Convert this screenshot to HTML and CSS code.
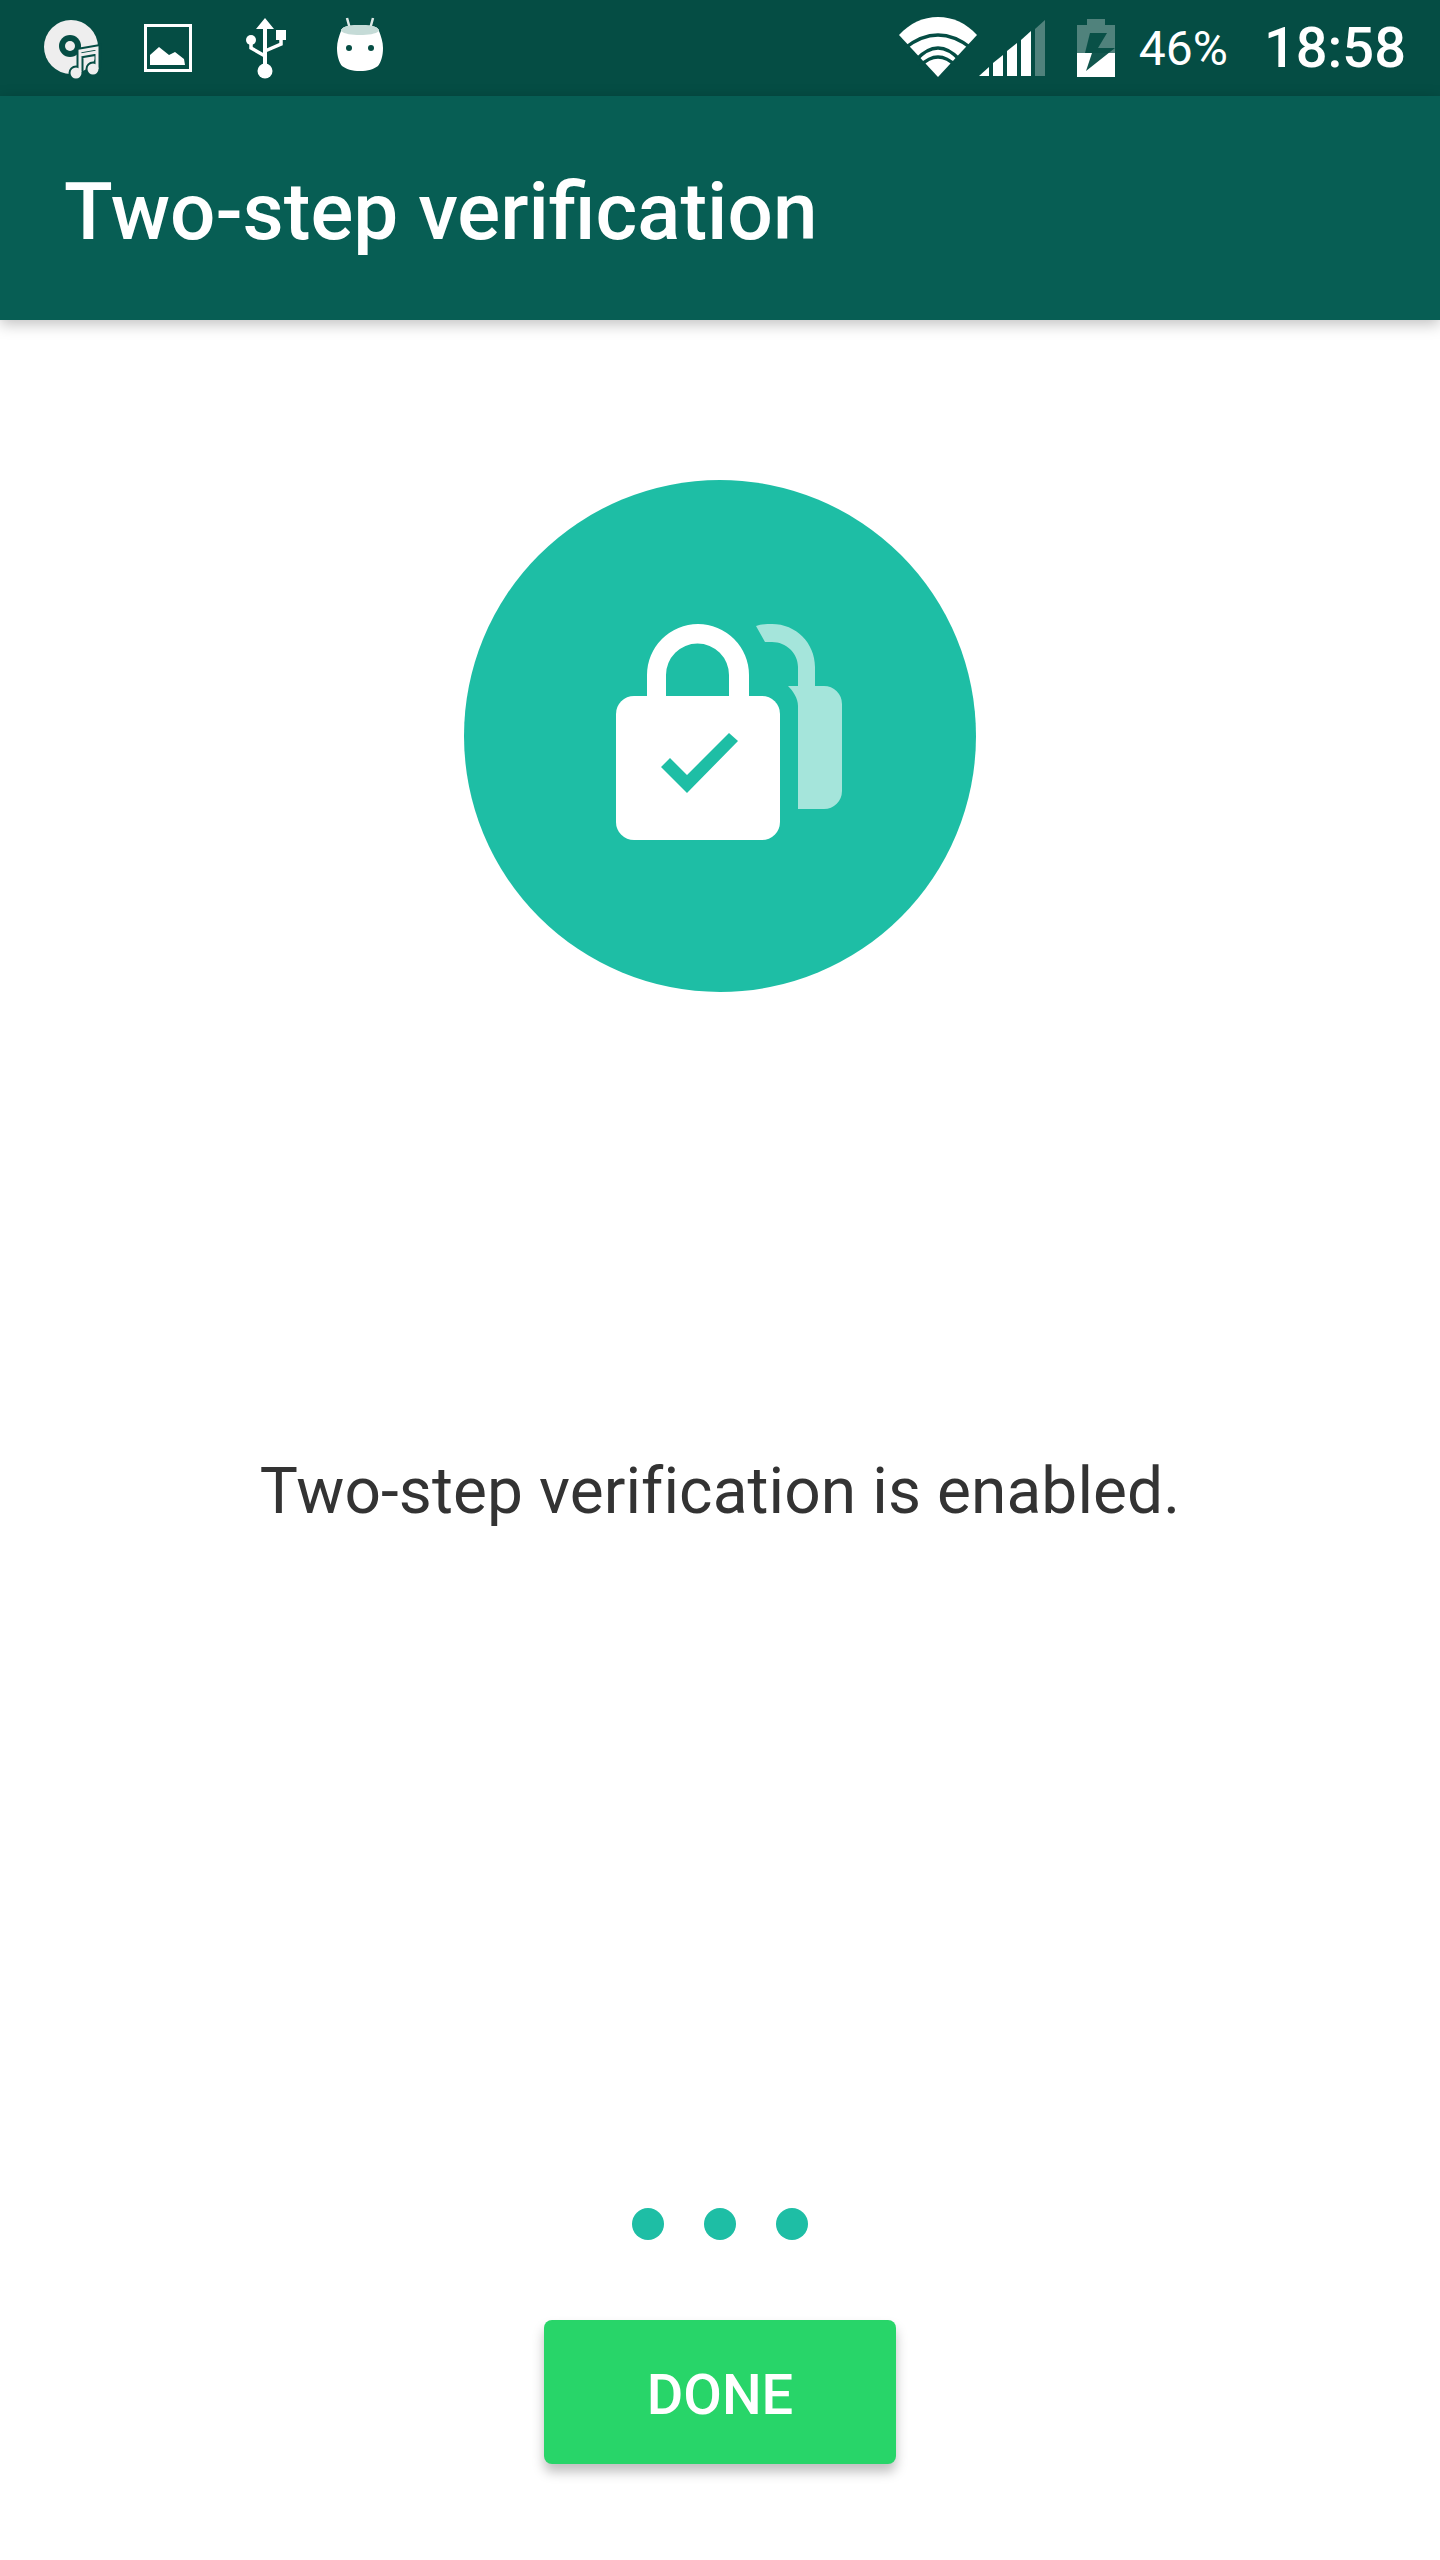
FILE: index.html
```html
<!DOCTYPE html>
<html lang="en">
<head>
  <meta charset="UTF-8" />
  <title>Two-step verification</title>
  <link rel="stylesheet" href="styles.css">
</head>
<body>

  <!-- ===== STATUS BAR ===== -->
  <div class="statusbar">
    <div class="status-left">
      <svg class="icon-disc" width="60" height="96" viewBox="42 0 60 96">
        <circle cx="71" cy="47" r="27" fill="#eeeeee"/>
        <circle cx="70" cy="46" r="11" fill="#054d44"/>
        <circle cx="70" cy="46" r="5" fill="#eeeeee"/>
        <path d="M80 71V51L98 48V68M80 55L98 52" fill="none" stroke="#054d44" stroke-width="7"/>
        <circle cx="76" cy="73" r="6.5" fill="#eeeeee" stroke="#054d44" stroke-width="2"/>
        <circle cx="93" cy="69" r="6.5" fill="#eeeeee" stroke="#054d44" stroke-width="2"/>
        <path d="M80 72V51L97 48V69M80 55L97 52" fill="none" stroke="#eeeeee" stroke-width="3"/>
      </svg>
      <svg class="icon-picture" width="48" height="96" viewBox="144 0 48 96">
        <rect x="145.500" y="25.500" width="45" height="45" fill="none" stroke="#ffffff" stroke-width="3"/>
        <path d="M150 65V55L159 47L169 55L175 52L184 59L185 65Z" fill="#ffffff"/>
      </svg>
      <svg class="icon-usb" width="42" height="96" viewBox="245 0 42 96">
        <path d="M265 18L274 29H267V64H263V29H256Z" fill="#ffffff"/>
        <circle cx="265" cy="71" r="7.500" fill="#ffffff"/>
        <circle cx="251" cy="40" r="5" fill="#ffffff"/>
        <rect x="276" y="30" width="10" height="10" fill="#ffffff"/>
        <path d="M251 42V48L265 56M281 38V44L265 51" fill="none" stroke="#ffffff" stroke-width="3.500"/>
      </svg>
      <svg class="icon-android" width="48" height="96" viewBox="336 0 48 96">
        <path d="M347 18L350 29M373 18L370 29" stroke="#dfe9e7" stroke-width="2.500"/>
        <path d="M360 25C348 25 341 27 341 31C339 36 337 42 337 48C337 56 339 62 342 66C346 69 352 71 360 71C368 71 374 69 378 66C381 62 383 56 383 48C383 42 381 36 379 31C379 27 372 25 360 25Z" fill="#ffffff"/>
        <path d="M341 31C341 27 348 25 360 25C372 25 379 27 379 31C376 34 368 35 360 35C352 35 344 34 341 31Z" fill="#c5dbd7"/>
        <circle cx="349" cy="48" r="3" fill="#054d44"/>
        <circle cx="371" cy="48" r="3" fill="#054d44"/>
      </svg>
    </div>
    <div class="status-right">
      <svg class="icon-wifi" width="80" height="96" viewBox="898 0 80 96">
        <path d="M938 77L899 35C910 23 923 17 938 17C953 17 966 23 977 35Z" fill="#ffffff"/>
        <path d="M905 48Q938 22 971 48M916 60Q938 36 960 60M920 66Q938 48 956 66" fill="none" stroke="#054d44" stroke-width="3.500"/>
      </svg>
      <svg class="icon-signal" width="67" height="96" viewBox="980 0 67 96">
        <path d="M980 76L990 67V76Z" fill="#ffffff"/>
        <path d="M994 63L1004 55V76H994Z" fill="#ffffff"/>
        <path d="M1008 51L1018 43V76H1008Z" fill="#ffffff"/>
        <path d="M1022 40L1032 31V76H1022Z" fill="#ffffff"/>
        <path d="M1036 29L1046 20V76H1036Z" fill="#ffffff" opacity="0.3"/>
      </svg>
      <svg class="icon-battery" width="38" height="96" viewBox="1078 0 38 96">
        <path d="M1088 19H1106V25H1116V53H1078V25H1088Z" fill="#ffffff" opacity="0.3"/>
        <rect x="1078" y="53" width="38" height="24" fill="#ffffff"/>
        <path d="M1091 33H1108L1099 48H1116L1087 71L1093 53H1086Z" fill="#054d44" opacity="0.95"/>
      </svg>
      <span class="battery-text">46%</span>
      <span class="clock">18:58</span>
    </div>
  </div>

  <!-- ===== APP BAR ===== -->
  <div class="appbar">
    <h1>Two-step verification</h1>
  </div>

  <!-- ===== CONTENT ===== -->
  <div class="content">
    <div class="lock-circle">
      <svg width="512" height="512" viewBox="464 480 512 512">
        <path d="M756 626C762 624 768 624 772 624C796 624 815 643 815 667V686H798V667C798 653 786 642 772 642C770 642 767 642 765 642Z" fill="#ffffff" opacity="0.6"/>
        <path d="M788 686H824A18 18 0 0 1 842 704V791A18 18 0 0 1 824 809H798V706C798 698 793 691 788 686Z" fill="#ffffff" opacity="0.6"/>
        <path d="M647 700V675A51 51 0 0 1 749 675V700H729V675A31.500 31.500 0 0 0 666 675V700Z" fill="#ffffff"/>
        <rect x="616" y="696" width="164" height="144" rx="18" fill="#ffffff"/>
        <path d="M661 767L670 758L687 775L729 733L738 741L687 793Z" fill="#1ebea5"/>
      </svg>
    </div>

    <p class="message">Two-step verification is enabled.</p>

    <div class="dots">
      <span class="dot"></span>
      <span class="dot"></span>
      <span class="dot"></span>
    </div>

    <button class="btn-done">DONE</button>
  </div>

</body>
</html>
```

FILE: styles.css
```css
* {
  box-sizing: border-box;
  margin: 0;
  padding: 0;
}

body {
  font-family: Roboto, "Liberation Sans", sans-serif;
  background-color: #fff;
  width: 1440px;
  height: 2560px;
  overflow: hidden;
}

svg {
  display: block;
  flex-shrink: 0;
}

.statusbar {
  height: 96px;
  background-color: #054d44;
  display: flex;
  justify-content: space-between;
  align-items: center;
  color: #fff;
}

.status-left {
  display: flex;
  padding-left: 42px;
}

.icon-picture {
  margin-left: 42px;
}

.icon-usb {
  margin-left: 53px;
}

.icon-android {
  margin-left: 49px;
}

.status-right {
  display: flex;
  align-items: center;
  padding-right: 34px;
}

.icon-signal {
  margin-left: 1px;
}

.icon-battery {
  margin-left: 31px;
}

.battery-text {
  margin-left: 24px;
  font-size: 48px;
  font-weight: 400;
}

.clock {
  margin-left: 36px;
  font-size: 56px;
  font-weight: 500;
}

.appbar {
  height: 224px;
  background-color: #075e54;
  display: flex;
  align-items: center;
  padding: 8px 0 0 64px;
  box-shadow: 0 4px 14px rgba(0,0,0,0.25);
  position: relative;
}

.appbar h1 {
  color: #fff;
  font-size: 80px;
  font-weight: 500;
  line-height: 1;
}

.content {
  display: flex;
  flex-direction: column;
  align-items: center;
  padding-top: 160px;
}

.lock-circle {
  width: 512px;
  height: 512px;
  border-radius: 50%;
  background-color: #1ebea5;
}

.message {
  margin-top: 460px;
  font-size: 64px;
  line-height: 80px;
  letter-spacing: 0.09px;
  color: #333;
}

.dots {
  display: flex;
  gap: 40px;
  margin-top: 676px;
}

.dot {
  width: 32px;
  height: 32px;
  border-radius: 50%;
  background-color: #1ebea5;
}

.btn-done {
  margin-top: 80px;
  width: 352px;
  height: 144px;
  padding-top: 6px;
  border: none;
  border-radius: 8px;
  background-color: #28d569;
  color: #fff;
  font-family: inherit;
  font-size: 56px;
  font-weight: 500;
  box-shadow: 0 8px 12px rgba(0,0,0,0.25);
}
```
